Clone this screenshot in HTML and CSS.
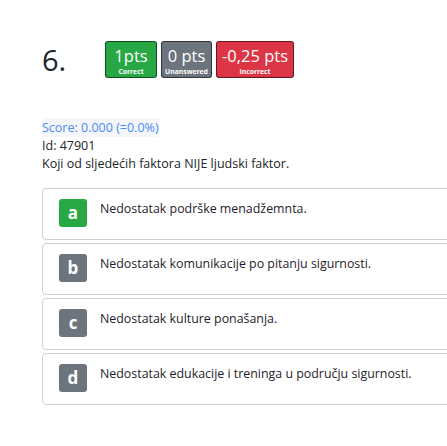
FILE: index.html
```html
<!DOCTYPE html>
<html lang="hr">
<head>
<meta charset="utf-8">
<title>Pitanje 6</title>
<link rel="stylesheet" href="styles.css">
</head>
<body>
<div class="question">
  <div class="header">
    <div class="number">6.</div>
    <div class="badges">
      <div class="badge badge-correct"><span class="pts">1pts</span><span class="label">Correct</span></div>
      <div class="badge badge-unanswered"><span class="pts">0 pts</span><span class="label">Unanswered</span></div>
      <div class="badge badge-incorrect"><span class="pts">-0,25 pts</span><span class="label">Incorrect</span></div>
    </div>
  </div>
  <div class="meta">
    <div class="score">Score: 0.000 (=0.0%)</div>
    <div class="id">Id: 47901</div>
    <div class="text">Koji od sljedećih faktora NIJE ljudski faktor.</div>
  </div>
  <div class="answers">
    <div class="answer"><span class="letter letter-correct">a</span><span class="answer-text">Nedostatak podrške menadžemnta.</span></div>
    <div class="answer"><span class="letter">b</span><span class="answer-text">Nedostatak komunikacije po pitanju sigurnosti.</span></div>
    <div class="answer"><span class="letter">c</span><span class="answer-text">Nedostatak kulture ponašanja.</span></div>
    <div class="answer"><span class="letter">d</span><span class="answer-text">Nedostatak edukacije i treninga u području sigurnosti.</span></div>
  </div>
</div>
</body>
</html>
```
FILE: styles.css
```css
html, body {
  margin: 0;
  padding: 0;
  background: #ffffff;
  overflow: hidden;
}
body {
  font-family: "Open Sans", "Noto Sans", sans-serif;
  color: #212529;
}
.question {
  padding: 41px 0 0 42px;
  width: 420px;
}
.header {
  display: flex;
  align-items: center;
  height: 37px;
}
.number {
  width: 63px;
  font-size: 29px;
  line-height: 37px;
  color: #212529;
}
.badges {
  display: flex;
  gap: 4px;
}
.badge {
  display: flex;
  flex-direction: column;
  align-items: center;
  box-sizing: border-box;
  height: 37px;
  padding: 2px 0 0;
  border: 1px solid rgba(0, 0, 0, 0.55);
  border-radius: 3px;
  color: #ffffff;
}
.badge-correct { background: #28a745; width: 52px; }
.badge-unanswered { background: #6c757d; width: 51px; }
.badge-incorrect { background: #dc3545; width: 78px; }
.pts {
  font-size: 16.5px;
  line-height: 23px;
  white-space: nowrap;
}
.label {
  font-size: 6.8px;
  line-height: 10px;
  font-weight: 700;
  white-space: nowrap;
}
.meta {
  margin-top: 40px;
  font-size: 12.5px;
  line-height: 18px;
}
.score {
  display: inline-block;
  color: #4a8cf7;
  background: #f4f6fa;
  line-height: 19px;
}
.answers {
  margin-top: 15px;
  margin-right: -100px;
  display: flex;
  flex-direction: column;
  gap: 3px;
}
.answer {
  display: flex;
  align-items: flex-start;
  gap: 13px;
  height: 52px;
  box-sizing: border-box;
  padding: 10px 16px 12px;
  border: 1px solid #cfcfcf;
  border-radius: 4px;
}
.letter {
  flex: none;
  width: 28px;
  height: 28px;
  border-radius: 3px;
  background: #6c757d;
  color: #ffffff;
  font-weight: 700;
  font-size: 17px;
  line-height: 27px;
  text-align: center;
}
.letter-correct { background: #28a745; }
.answer-text {
  font-size: 12.4px;
  line-height: 20px;
  color: #1f1d2b;
}
```
